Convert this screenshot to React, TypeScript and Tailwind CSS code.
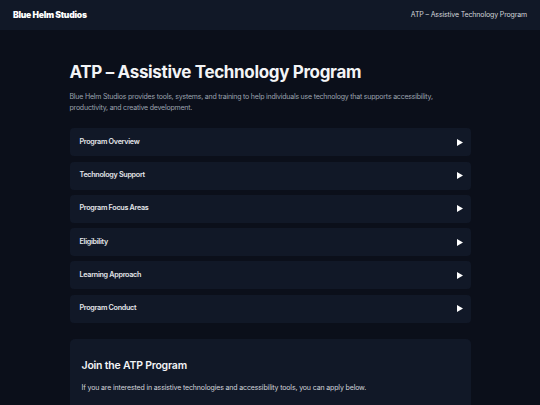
const sections = [
  'Program Overview',
  'Technology Support',
  'Program Focus Areas',
  'Eligibility',
  'Learning Approach',
  'Program Conduct',
];

function Arrow() {
  return (
    <svg width="6" height="7" viewBox="0 0 6 7" aria-hidden="true">
      <path d="M0 0 L6 3.5 L0 7 Z" fill="#ffffff" />
    </svg>
  );
}

export default function App() {
  return (
    <div className="min-h-[405px] bg-[#0b0f1a] font-['Inter',sans-serif] text-white">
      {/* Header */}
      <header className="flex h-[30px] items-center justify-between bg-[#111827] px-[13px]">
        <span className="text-[8.6px] font-black tracking-[-0.03em] text-white">Blue Helm Studios</span>
        <span className="text-[7px] tracking-[-0.02em] text-[#d1d5db]">ATP – Assistive Technology Program</span>
      </header>

      <main className="mx-auto w-[401px] pt-[32px]">
        <h1 className="text-[17px] font-bold leading-[1.2] tracking-[-0.02em] text-[#f3f4f6]">
          ATP – Assistive Technology Program
        </h1>
        <p className="mt-[9px] text-[7px] leading-[11px] tracking-[-0.03em] text-[#9ca3af]">
          Blue Helm Studios provides tools, systems, and training to help individuals use technology that supports accessibility, productivity, and creative development.
        </p>

        {/* Sections */}
        <div className="mt-[15px] flex flex-col gap-[5.25px]">
          {sections.map((s) => (
            <button
              key={s}
              className="flex h-[28px] w-full items-center justify-between rounded-[4px] bg-[#111827] pl-[10px] pr-[8px] text-left"
            >
              <span className="text-[7.2px] font-semibold tracking-[-0.04em] text-[#e5e7eb]">{s}</span>
              <Arrow />
            </button>
          ))}
        </div>

        {/* Join */}
        <section className="mt-[16px] rounded-[5px] bg-[#111827] px-[12px] pt-[19px] pb-[20px]">
          <h2 className="text-[10.5px] font-semibold tracking-[-0.02em] text-[#f3f4f6]">Join the ATP Program</h2>
          <p className="mt-[10px] text-[7px] tracking-[-0.02em] text-[#d1d5db]">
            If you are interested in assistive technologies and accessibility tools, you can apply below.
          </p>
        </section>
      </main>
    </div>
  );
}
